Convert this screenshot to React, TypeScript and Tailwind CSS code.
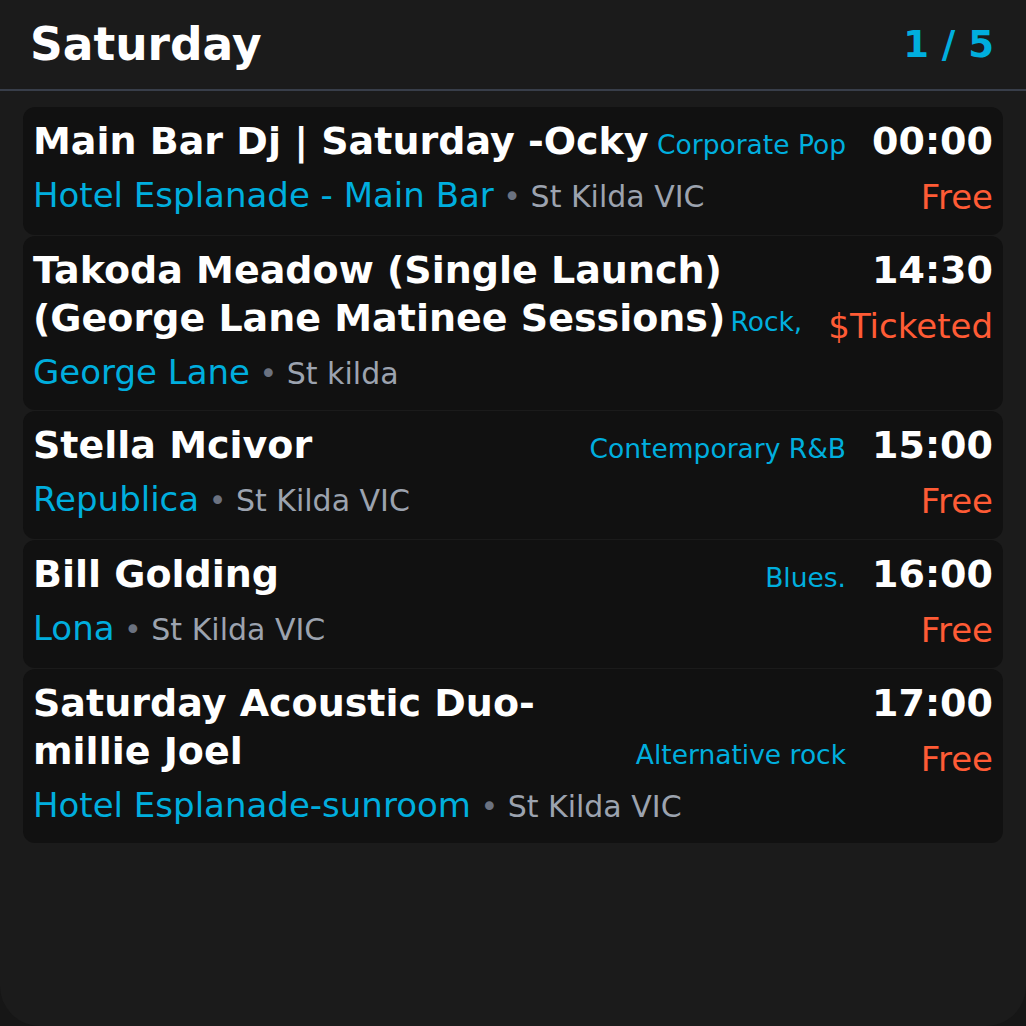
type EventItem = {
  title: string;
  genre: string;
  time: string;
  price: string;
  venue: string;
  location: string;
};

const events: EventItem[] = [
  {
    title: 'Main Bar Dj | Saturday -Ocky',
    genre: 'Corporate Pop',
    time: '00:00',
    price: 'Free',
    venue: 'Hotel Esplanade - Main Bar',
    location: 'St Kilda VIC',
  },
  {
    title: 'Takoda Meadow (Single Launch) (George Lane Matinee Sessions)',
    genre: 'Rock,',
    time: '14:30',
    price: '$Ticketed',
    venue: 'George Lane',
    location: 'St kilda',
  },
  {
    title: 'Stella Mcivor',
    genre: 'Contemporary R&B',
    time: '15:00',
    price: 'Free',
    venue: 'Republica',
    location: 'St Kilda VIC',
  },
  {
    title: 'Bill Golding',
    genre: 'Blues.',
    time: '16:00',
    price: 'Free',
    venue: 'Lona',
    location: 'St Kilda VIC',
  },
  {
    title: 'Saturday Acoustic Duo-millie Joel',
    genre: 'Alternative rock',
    time: '17:00',
    price: 'Free',
    venue: 'Hotel Esplanade-sunroom',
    location: 'St Kilda VIC',
  },
];

function EventCard({ event }: { event: EventItem }) {
  return (
    <div className="flex rounded-xl bg-[#111111] px-[10px] pt-[10px] pb-[16px]">
      <div className="min-w-0 flex-1">
        <div className="flex items-end gap-x-1">
          <h3 className="min-w-0 text-[38px] leading-[48px] font-bold text-white">{event.title}</h3>
          <span className="ml-auto shrink-0 text-[26.5px] leading-[40px] text-[#00aede]">{event.genre}</span>
        </div>
        <div className="mt-[8px] text-[34px] leading-[44px] whitespace-nowrap">
          <span className="text-[#00aede]">{event.venue}</span>
          <span className="text-[30px] leading-[40px] text-[#6b7280]">{' • '}</span>
          <span className="text-[30px] leading-[40px] text-[#9ca3af]">{event.location}</span>
        </div>
      </div>
      <div className="ml-[26px] flex shrink-0 flex-col items-end">
        <span className="text-[38px] leading-[48px] font-bold text-white">{event.time}</span>
        <span className="mt-[10px] text-[34px] leading-[44px] text-[#ff5b35]">{event.price}</span>
      </div>
    </div>
  );
}

export default function App() {
  return (
    <div className="min-h-screen bg-[#161616] font-['DejaVu_Sans',sans-serif]">
      <div className="h-[1026px] rounded-b-[40px] bg-[#1b1b1b]">
        <div className="flex items-center justify-between border-b-2 border-[#383e4a] pt-[18px] pr-[32px] pb-[17px] pl-[30px]">
          <h1 className="text-[45.5px] leading-[54px] font-bold text-white">Saturday</h1>
          <span className="text-[37px] leading-[48px] font-bold text-[#00aede]">1 / 5</span>
        </div>
        <div className="flex flex-col gap-px px-[23px] pt-[16px]">
          {events.map((e) => (
            <EventCard key={e.time} event={e} />
          ))}
        </div>
      </div>
    </div>
  );
}
